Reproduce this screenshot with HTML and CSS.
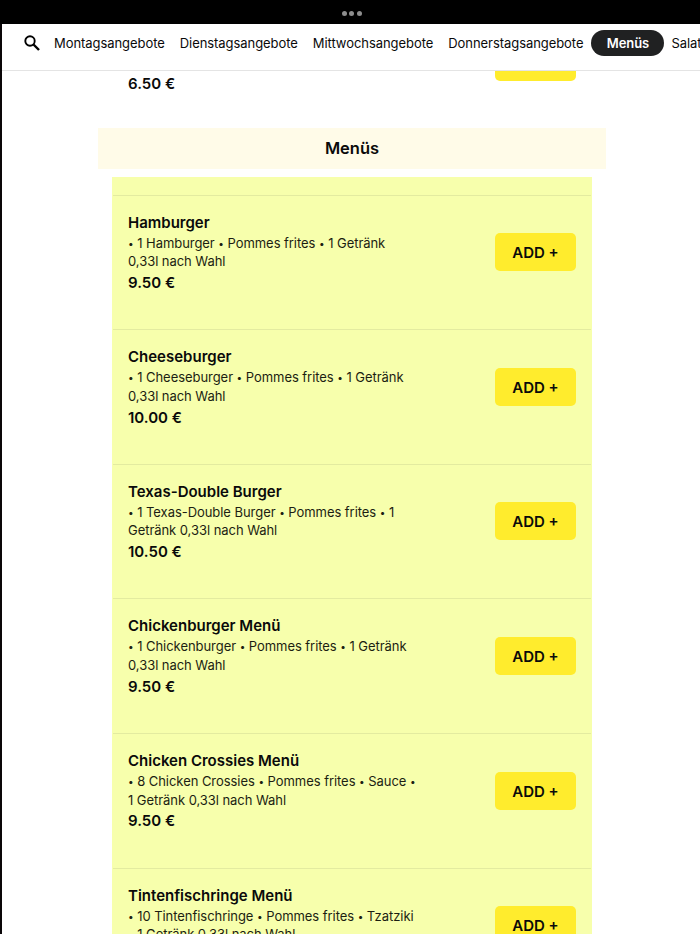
FILE: index.html
```html
<!DOCTYPE html>
<html lang="de">
<head>
    <meta charset="UTF-8">
    <title>Menüs</title>
    <link rel="stylesheet" href="styles.css">
</head>
<body>
<div class="window-bar">
    <span class="dot"></span>
    <span class="dot"></span>
    <span class="dot"></span>
</div>

<div class="page">
    <nav class="category-nav">
        <svg class="search-icon" viewBox="0 0 17 17" width="17" height="17">
            <circle cx="6" cy="6" r="4.7" fill="none" stroke="#000" stroke-width="1.9"/>
            <path d="M9.5 9.5 L15 15" stroke="#000" stroke-width="2.4"/>
        </svg>
        <a class="category">Montagsangebote</a>
        <a class="category">Dienstagsangebote</a>
        <a class="category">Mittwochsangebote</a>
        <a class="category">Donnerstagsangebote</a>
        <a class="category active">Menüs</a>
        <a class="category">Salate</a>
    </nav>

    <!-- End of the previous category -->
    <div class="previous-item">
        <div class="price">6.50 €</div>
        <div class="button-end"></div>
    </div>

    <h2 class="section-title">Menüs</h2>

    <div class="menu-list">
        <div class="menu-item">
            <div class="item-info">
                <h3>Hamburger</h3>
                <p><i>•</i> 1 Hamburger <i>•</i> Pommes frites <i>•</i> 1 Getränk<br>0,33l nach Wahl</p>
                <div class="price">9.50 €</div>
            </div>
            <button class="add-button">ADD +</button>
        </div>

        <div class="menu-item">
            <div class="item-info">
                <h3>Cheeseburger</h3>
                <p><i>•</i> 1 Cheeseburger <i>•</i> Pommes frites <i>•</i> 1 Getränk<br>0,33l nach Wahl</p>
                <div class="price">10.00 €</div>
            </div>
            <button class="add-button">ADD +</button>
        </div>

        <div class="menu-item">
            <div class="item-info">
                <h3>Texas-Double Burger</h3>
                <p><i>•</i> 1 Texas-Double Burger <i>•</i> Pommes frites <i>•</i> 1<br>Getränk 0,33l nach Wahl</p>
                <div class="price">10.50 €</div>
            </div>
            <button class="add-button">ADD +</button>
        </div>

        <div class="menu-item">
            <div class="item-info">
                <h3>Chickenburger Menü</h3>
                <p><i>•</i> 1 Chickenburger <i>•</i> Pommes frites <i>•</i> 1 Getränk<br>0,33l nach Wahl</p>
                <div class="price">9.50 €</div>
            </div>
            <button class="add-button">ADD +</button>
        </div>

        <div class="menu-item">
            <div class="item-info">
                <h3>Chicken Crossies Menü</h3>
                <p><i>•</i> 8 Chicken Crossies <i>•</i> Pommes frites <i>•</i> Sauce <i>•</i><br>1 Getränk 0,33l nach Wahl</p>
                <div class="price">9.50 €</div>
            </div>
            <button class="add-button">ADD +</button>
        </div>

        <div class="menu-item">
            <div class="item-info">
                <h3>Tintenfischringe Menü</h3>
                <p><i>•</i> 10 Tintenfischringe <i>•</i> Pommes frites <i>•</i> Tzatziki<br><i>•</i> 1 Getränk 0,33l nach Wahl</p>
            </div>
            <button class="add-button">ADD +</button>
        </div>
    </div>
</div>
</body>
</html>
```
FILE: styles.css
```css
* {
    box-sizing: border-box;
}

body {
    margin: 0;
    height: 934px;
    overflow: hidden;
    font-family: Inter, "Liberation Sans", sans-serif;
    color: #0a0a0a;
    background-color: #fff;
}

.window-bar {
    display: flex;
    justify-content: center;
    align-items: center;
    gap: 2.5px;
    height: 24px;
    padding: 2px 0 0 3px;
    background-color: #000;
}

.dot {
    width: 5px;
    height: 5px;
    border-radius: 50%;
    background-color: #8e8e8e;
}

.page {
    height: 910px;
    overflow: hidden;
    border-left: 2px solid #0a0608;
}

.category-nav {
    display: flex;
    align-items: flex-start;
    height: 47px;
    padding: 6px 0 0 22px;
    overflow: hidden;
    border-bottom: 1px solid #e4e4e4;
}

.search-icon {
    flex: none;
    margin: 5px 13px 0 0;
}

.category {
    flex: none;
    margin-right: 15px;
    font-size: 13px;
    line-height: 26px;
    letter-spacing: -0.06px;
    white-space: nowrap;
}

.category.active {
    width: 73px;
    margin: 0 7px 0 -7px;
    border-radius: 13px;
    text-align: center;
    font-weight: 600;
    color: #fff;
    background-color: #202122;
}

.previous-item {
    display: flex;
    justify-content: space-between;
    width: 448px;
    height: 57px;
    margin-left: 126px;
}

.previous-item .price {
    margin-top: 3px;
}

.button-end {
    width: 81px;
    height: 10px;
    border-radius: 0 0 5px 5px;
    background-color: #ffec2d;
}

.section-title {
    width: 508px;
    height: 41px;
    margin: 0 0 8px 96px;
    text-align: center;
    font-size: 16.5px;
    font-weight: 600;
    line-height: 41px;
    background-color: #fffbe8;
}

.menu-list {
    width: 479.5px;
    margin-left: 110px;
    padding: 17.5px 1px 0;
    background-color: #f7ffac;
}

.menu-item {
    display: flex;
    justify-content: space-between;
    height: 134.65px;
    padding: 17px 14.5px 0 15px;
    border-top: 1px solid #e3eba0;
}

h3 {
    margin: 0;
    font-size: 15px;
    font-weight: 600;
    line-height: 20px;
}

p {
    margin: 1px 0 0;
    font-size: 13px;
    line-height: 18.7px;
    letter-spacing: -0.05px;
    white-space: nowrap;
    color: #1c1e12;
}

/* small separator bullets */
p i {
    font-style: normal;
    font-size: 10px;
    line-height: 1;
    vertical-align: 1px;
}

.price {
    margin-top: 2px;
    font-size: 15px;
    font-weight: 600;
    line-height: 20px;
}

.add-button {
    width: 81px;
    height: 38px;
    margin-top: 20.5px;
    padding: 1px 0 0;
    border: none;
    border-radius: 5px;
    font-family: inherit;
    font-size: 15px;
    font-weight: 600;
    color: #0a0a0a;
    background-color: #ffec2d;
}
```
